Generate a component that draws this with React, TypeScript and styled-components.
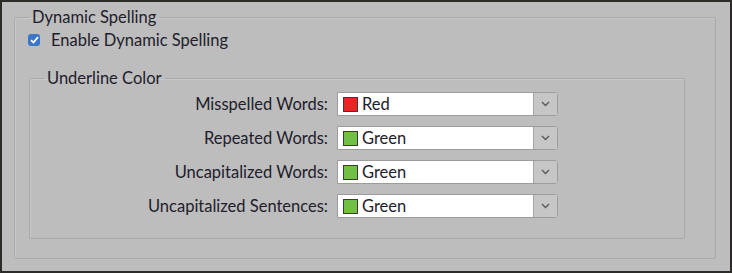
import React from 'react';
import styled, { createGlobalStyle } from 'styled-components';

const GlobalStyle = createGlobalStyle`
  html, body {
    margin: 0;
    padding: 0;
    background: #bcbcbc;
  }
  * {
    box-sizing: border-box;
  }
`;

const Frame = styled.div`
  width: 732px;
  height: 273px;
  border: 2px solid #2c2b27;
  background: #bdbdbd;
  padding: 6px 14px 0 12px;
  font-family: 'Lato', 'Liberation Sans', sans-serif;
  font-size: 16.5px;
  color: #1e202b;
`;

const Group = styled.fieldset<{ $height: number }>`
  margin: 0;
  height: ${({ $height }) => $height}px;
  border: 1px solid #a9a9a9;
  box-shadow: inset 1px 1px 0 #c9c9c9;
  border-radius: 2px;
  padding: 0 0 0 14px;
`;

const Legend = styled.legend`
  padding: 0 3px;
  margin-left: 0;
  line-height: 19px;
`;

const CheckRow = styled.label`
  display: flex;
  align-items: center;
  gap: 11px;
  height: 22px;
  margin: 2px 0 0 -1px;
`;

const Box = styled.span`
  width: 12px;
  height: 12px;
  border-radius: 3px;
  background: #3b77c9;
  display: flex;
  align-items: center;
  justify-content: center;
`;

const InnerWrap = styled.div`
  margin-top: 18px;
  width: 656px;
`;

const Grid = styled.div`
  display: grid;
  grid-template-columns: 276px 221px;
  column-gap: 9px;
  row-gap: 10px;
  padding: 4px 0 0 8px;
`;

const Label = styled.span`
  text-align: right;
  line-height: 24px;
`;

const Select = styled.div`
  display: flex;
  height: 24px;
  border: 1px solid #9c9c9c;
  border-radius: 0 3px 3px 0;
  background: #ffffff;
`;

const Value = styled.div`
  flex: 1;
  display: flex;
  align-items: center;
  gap: 4px;
  padding-left: 5px;
`;

const Swatch = styled.span<{ $color: string }>`
  width: 15px;
  height: 15px;
  background: ${({ $color }) => $color};
  border: 1px solid #3a3a3a;
`;

const Arrow = styled.div`
  width: 24px;
  border-left: 1px solid #a5a5a5;
  background: #c6c6c6;
  border-radius: 0 2px 2px 0;
  display: flex;
  align-items: center;
  justify-content: center;
`;

const rows = [
  { label: 'Misspelled Words:', name: 'Red', color: '#ec2424' },
  { label: 'Repeated Words:', name: 'Green', color: '#72c043' },
  { label: 'Uncapitalized Words:', name: 'Green', color: '#72c043' },
  { label: 'Uncapitalized Sentences:', name: 'Green', color: '#72c043' },
];

const App: React.FC = () => {
  return (
    <>
      <GlobalStyle />
      <Frame>
        <Group $height={251}>
          <Legend>Dynamic Spelling</Legend>
          <CheckRow>
            <Box>
              <svg width="9" height="8" viewBox="0 0 9 8">
                <path d="M1 4.2 L3.4 6.5 L8 1.2" fill="none" stroke="#fff" strokeWidth="1.8" />
              </svg>
            </Box>
            Enable Dynamic Spelling
          </CheckRow>
          <InnerWrap>
            <Group $height={170}>
              <Legend>Underline Color</Legend>
              <Grid>
                {rows.map((r) => (
                  <React.Fragment key={r.label}>
                    <Label>{r.label}</Label>
                    <Select>
                      <Value>
                        <Swatch $color={r.color} />
                        {r.name}
                      </Value>
                      <Arrow>
                        <svg width="9" height="6" viewBox="0 0 9 6">
                          <path d="M1 1 L4.5 4.5 L8 1" fill="none" stroke="#5a5a5a" strokeWidth="1.4" />
                        </svg>
                      </Arrow>
                    </Select>
                  </React.Fragment>
                ))}
              </Grid>
            </Group>
          </InnerWrap>
        </Group>
      </Frame>
    </>
  );
};

export default App;
